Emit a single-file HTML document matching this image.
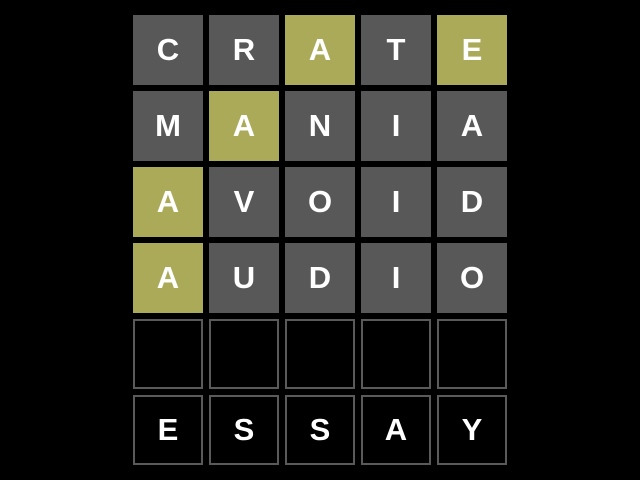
<!DOCTYPE html>
<html><head><style>
html,body{margin:0;padding:0;background:#000;width:640px;height:480px;overflow:hidden}
.t{position:absolute;width:70px;height:70px;box-sizing:border-box;display:flex;align-items:center;justify-content:center;color:#fff;font-family:"Liberation Sans",sans-serif;font-weight:bold;font-size:31px}
.g{background:#585858}.y{background:#aaaa58}.e{border:2px solid #5a5a5a;background:#000}
</style></head><body>
<script>
var rows=[["C g","R g","A y","T g","E y"],["M g","A y","N g","I g","A g"],["A y","V g","O g","I g","D g"],["A y","U g","D g","I g","O g"],[" e"," e"," e"," e"," e"],["E e","S e","S e","A e","Y e"]];
var h="";rows.forEach(function(r,i){r.forEach(function(c,j){var p=c.split(" ");h+='<div class="t '+p[1]+'" style="left:'+(133+76*j)+'px;top:'+(15+76*i)+'px">'+p[0]+'</div>';});});
document.write(h);
</script>
</body></html>
